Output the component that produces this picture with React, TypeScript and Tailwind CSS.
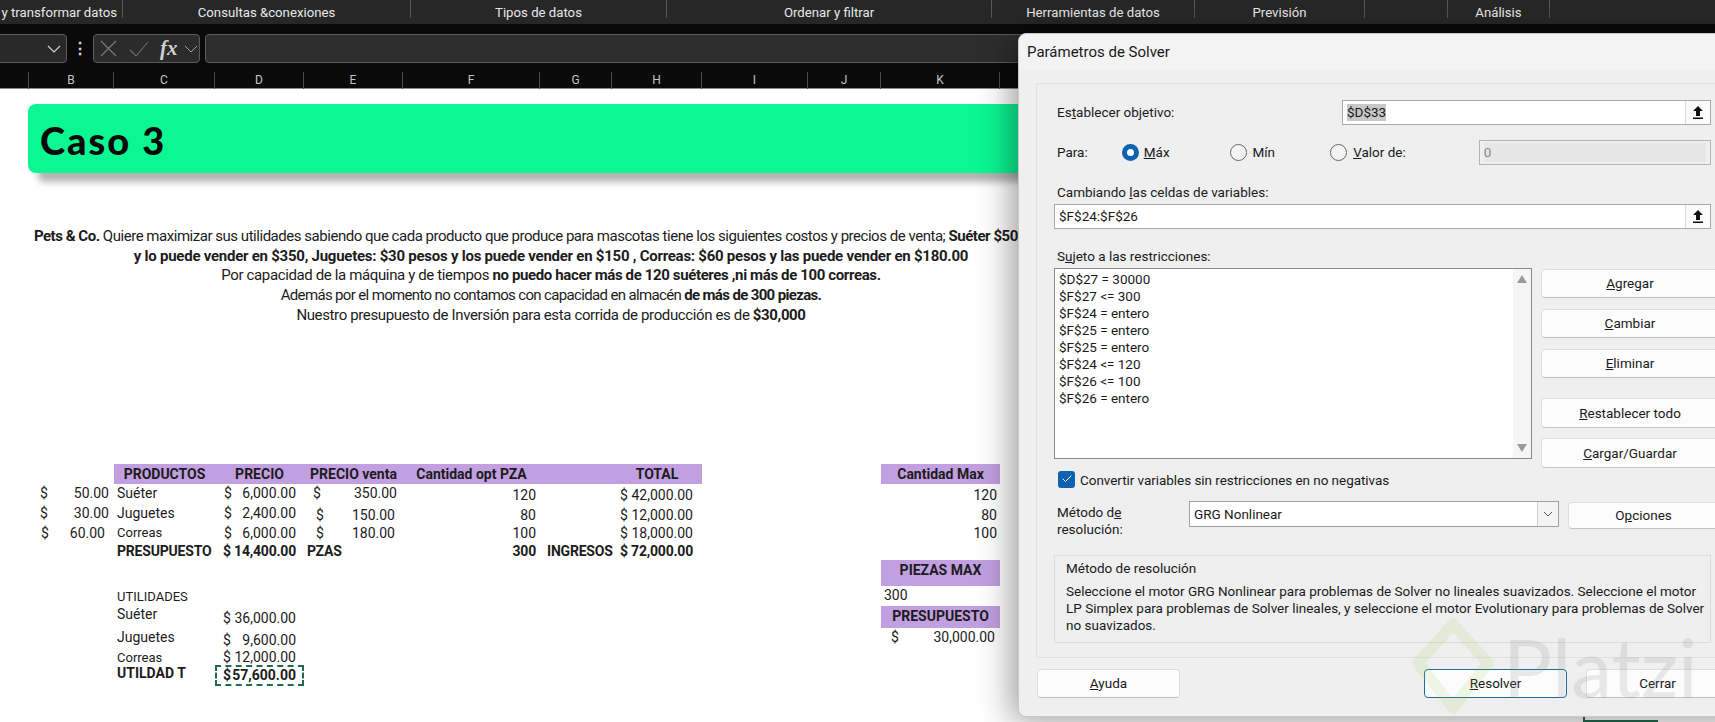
import React from 'react';
import { Check } from 'lucide-react';

const sheetCols = 'grid-cols-[29px_85px_101px_89px_99px_137px_72px_90px_106px_73px_119px]';
const purple = 'bg-[#c29fe0]';

const Chevron = ({ className }: { className: string }) => (
  <svg width="14" height="8" viewBox="0 0 14 8" fill="none" stroke="currentColor" strokeWidth="1.2" className={className}>
    <path d="M1 1 L7 7 L13 1" />
  </svg>
);

const Ribbon = () => (
  <div className="flex h-[24px] items-start bg-[#272727] text-[13.2px] leading-[25px] text-[#e8e8e8] whitespace-nowrap">
    <div className="h-[18px] w-[123px] border-r border-[#555] pr-[5px] text-right">y transformar datos</div>
    <div className="h-[18px] w-[288px] border-r border-[#555] text-center">Consultas &amp;conexiones</div>
    <div className="h-[18px] w-[256px] border-r border-[#555] text-center">Tipos de datos</div>
    <div className="h-[18px] w-[325px] border-r border-[#555] text-center">Ordenar y filtrar</div>
    <div className="h-[18px] w-[203px] border-r border-[#555] text-center">Herramientas de datos</div>
    <div className="h-[18px] w-[170px] border-r border-[#555] text-center">Previsión</div>
    <div className="h-[18px] w-[83px] border-r border-[#555]" />
    <div className="h-[18px] w-[102px] border-r border-[#555] text-center">Análisis</div>
  </div>
);

const FormulaBar = () => (
  <div className="flex h-[48px] items-start bg-[#0a0a0a] pt-[10px]">
    <div className="-ml-[10px] flex h-[29px] w-[77px] items-center justify-end rounded-[4px] border border-[#5c5c5c] bg-[#292929] pr-[5px]">
      <Chevron className="text-[#d0d0d0]" />
    </div>
    <div className="flex h-[29px] w-[26px] items-center justify-center text-[16px] font-bold text-[#d8d8d8]">⋮</div>
    <div className="flex h-[29px] w-[107px] items-center rounded-[4px] border border-[#5c5c5c] bg-[#2b2b2b] pl-[6px]">
      <svg width="17" height="17" viewBox="0 0 17 17" fill="none" stroke="#7a7a7a" strokeWidth="1.1">
        <path d="M1 1 L16 16 M16 1 L1 16" />
      </svg>
      <svg width="20" height="16" viewBox="0 0 20 16" fill="none" stroke="#6c6c6c" strokeWidth="1.1" className="ml-[12px]">
        <path d="M1 9 L7 15 L19 1" />
      </svg>
      <span className="ml-[11px] font-[Liberation_Serif,serif] text-[21px] font-bold italic leading-none text-[#d0d0d0]">fx</span>
      <svg width="14" height="8" viewBox="0 0 14 8" fill="none" stroke="#a0a0a0" strokeWidth="1" className="ml-[6px]">
        <path d="M1 1 L7 7 L13 1" />
      </svg>
    </div>
    <div className="ml-[5px] h-[29px] w-[900px] rounded-[4px] border border-[#5c5c5c] bg-[#2d2d2d]" />
  </div>
);

const ColumnHeaders = () => (
  <div className={`grid h-[17px] ${sheetCols} border-b border-[#8c8c8c] bg-[#0a0a0a] text-center text-[12px] leading-[17px] text-[#c4c4c4]`}>
    {['', 'B', 'C', 'D', 'E', 'F', 'G', 'H', 'I', 'J', 'K'].map((letter) => (
      <div key={letter} className="border-r border-[#4a4a4a]">{letter}</div>
    ))}
  </div>
);

const Row = ({ className, children }: { className: string; children?: React.ReactNode }) => (
  <div className={`grid ${sheetCols} items-center ${className}`}>{children}</div>
);

// accounting format: currency sign on the left, amount on the right
const Money = ({ value, className }: { value: string; className: string }) => (
  <div className={`row-start-1 flex justify-between ${className}`}>
    <span>$</span>
    <span>{value}</span>
  </div>
);

const HeaderCell = ({ className, children }: { className: string; children?: React.ReactNode }) => (
  <div className={`row-start-1 h-full text-center text-[14px] font-bold ${purple} ${className}`}>{children}</div>
);

const Sheet = () => (
  <div className="h-[633px] bg-white text-[14px] leading-[17px] text-[#1c1c1c] whitespace-nowrap">
    <div className="ml-[28px] mt-[15px] flex h-[69px] w-[1150px] items-center rounded-[8px] bg-[#0bf794] pl-[12px] pt-[3px] shadow-[8px_11px_7px_-2px_rgba(0,0,0,0.3)]">
      <span className="font-[Lato,sans-serif] text-[38px] font-black tracking-[2px] text-[#0a0a0a]">Caso 3</span>
    </div>

    <div className="mt-[54px] w-[1102px] text-center text-[15px] leading-[19.7px]">
      <div className="pr-[9px] tracking-[-0.47px]"><b>Pets &amp; Co.</b> Quiere maximizar sus utilidades sabiendo que cada producto que produce para mascotas tiene los siguientes costos y precios de venta; <b>Suéter $50 pesos</b></div>
      <div className="tracking-[-0.25px]"><b>y lo puede vender en $350, Juguetes: $30 pesos y los puede vender en $150 , Correas: $60 pesos y las puede vender en $180.00</b></div>
      <div className="tracking-[-0.37px]">Por capacidad de la máquina y de tiempos <b>no puedo hacer más de 120 suéteres ,ni más de 100 correas.</b></div>
      <div className="tracking-[-0.65px]">Además por el momento no contamos con capacidad en almacén <b>de más de 300 piezas.</b></div>
      <div className="tracking-[-0.37px]">Nuestro presupuesto de Inversión para esta corrida de producción es de <b>$30,000</b></div>
    </div>

    <div className="mt-[138px]">
      <Row className="h-[20px] leading-[20px]">
        <HeaderCell className="col-start-3">PRODUCTOS</HeaderCell>
        <HeaderCell className="col-start-4">PRECIO</HeaderCell>
        <HeaderCell className="col-start-5">PRECIO venta</HeaderCell>
        <HeaderCell className="col-start-6">Cantidad opt PZA</HeaderCell>
        <HeaderCell className="col-start-7" />
        <HeaderCell className="col-start-8">TOTAL</HeaderCell>
        <HeaderCell className="col-start-11">Cantidad Max</HeaderCell>
      </Row>
      <Row className="h-[20px]">
        <Money value="50.00" className="col-start-2 pl-[11px] pr-[5px]" />
        <div className="col-start-3 row-start-1 pl-[3px]">Suéter</div>
        <Money value="6,000.00" className="col-start-4 pl-[9px] pr-[8px]" />
        <Money value="350.00" className="col-start-5 pl-[9px] pr-[6px]" />
        <div className="col-start-6 row-start-1 pr-[4px] pt-[3px] text-right">120</div>
        <Money value="42,000.00" className="col-start-8 pl-[8px] pr-[9px] pt-[3px]" />
        <div className="col-start-11 row-start-1 pr-[3px] pt-[3px] text-right">120</div>
      </Row>
      <Row className="h-[20px]">
        <Money value="30.00" className="col-start-2 pl-[11px] pr-[5px]" />
        <div className="col-start-3 row-start-1 pl-[3px]">Juguetes</div>
        <Money value="2,400.00" className="col-start-4 pl-[9px] pr-[8px]" />
        <Money value="150.00" className="col-start-5 pl-[12px] pr-[8px] pt-[3px]" />
        <div className="col-start-6 row-start-1 pr-[4px] pt-[3px] text-right">80</div>
        <Money value="12,000.00" className="col-start-8 pl-[8px] pr-[9px] pt-[3px]" />
        <div className="col-start-11 row-start-1 pr-[3px] pt-[3px] text-right">80</div>
      </Row>
      <Row className="h-[19px]">
        <Money value="60.00" className="col-start-2 pl-[12px] pr-[9px]" />
        <div className="col-start-3 row-start-1 pb-[2px] pl-[3px] text-[13px]">Correas</div>
        <Money value="6,000.00" className="col-start-4 pl-[9px] pr-[8px]" />
        <Money value="180.00" className="col-start-5 pl-[12px] pr-[8px]" />
        <div className="col-start-6 row-start-1 pr-[4px] text-right">100</div>
        <Money value="18,000.00" className="col-start-8 pl-[8px] pr-[9px]" />
        <div className="col-start-11 row-start-1 pr-[3px] text-right">100</div>
      </Row>
      <Row className="h-[17px] font-bold tracking-[-0.2px]">
        <div className="col-start-3 row-start-1 pl-[3px]">PRESUPUESTO</div>
        <Money value="14,400.00" className="col-start-4 pl-[8px] pr-[8px]" />
        <div className="col-start-5 row-start-1 pl-[3px]">PZAS</div>
        <div className="col-start-6 row-start-1 pr-[4px] text-right">300</div>
        <div className="col-start-7 row-start-1 pl-[7px]">INGRESOS</div>
        <Money value="72,000.00" className="col-start-8 pl-[8px] pr-[9px]" />
      </Row>
      <Row className="h-[26px]">
        <HeaderCell className="col-start-11 leading-[20px]">PIEZAS MAX</HeaderCell>
      </Row>
      <Row className="h-[20px]">
        <div className="col-start-3 row-start-1 pl-[3px] pt-[2px] text-[13px]">UTILIDADES</div>
        <div className="col-start-11 row-start-1 pl-[3px]">300</div>
      </Row>
      <Row className="h-[22px]">
        <div className="col-start-3 row-start-1 pb-[4px] pl-[3px]">Suéter</div>
        <Money value="36,000.00" className="col-start-4 pl-[8px] pr-[8px] pt-[4px]" />
        <HeaderCell className="col-start-11 leading-[20px]">PRESUPUESTO</HeaderCell>
      </Row>
      <Row className="h-[22px]">
        <div className="col-start-3 row-start-1 pb-[3px] pl-[3px]">Juguetes</div>
        <Money value="9,600.00" className="col-start-4 pl-[8px] pr-[8px] pt-[3px]" />
        <Money value="30,000.00" className="col-start-11 pb-[2px] pl-[10px] pr-[5px]" />
      </Row>
      <Row className="h-[15px] leading-[15px]">
        <div className="col-start-3 row-start-1 pl-[3px] text-[13px]">Correas</div>
        <Money value="12,000.00" className="col-start-4 pl-[8px] pr-[8px]" />
      </Row>
      <Row className="h-[21px] font-bold">
        <div className="col-start-3 row-start-1 pb-[4px] pl-[3px]">UTILDAD T</div>
        <Money value="57,600.00" className="col-start-4 h-[21px] items-center border-2 border-dashed border-[#1f6b4f] pl-[6px] pr-[6px]" />
      </Row>
    </div>
  </div>
);

const UploadButton = () => (
  <div className="flex h-full w-[25px] items-center justify-center border-l border-[#d9d9d9] bg-[#fbfbfb]">
    <svg width="12" height="13" viewBox="0 0 12 13">
      <path d="M6 0 L11 5 H8 V10 H4 V5 H1 Z M1 11.5 H11 V13 H1 Z" fill="#111" />
    </svg>
  </div>
);

const RefInput = ({ value, className, selected }: { value: string; className: string; selected?: boolean }) => (
  <div className={`flex h-[25px] items-center justify-between border border-[#a9a9a9] bg-white pl-[4px] ${className}`}>
    <span className={selected ? 'bg-[#c8c8c8]' : ''}>{value}</span>
    <UploadButton />
  </div>
);

const Radio = ({ on }: { on?: boolean }) =>
  on ? (
    <div className="flex size-[17px] items-center justify-center rounded-full bg-[#0f62b0]">
      <div className="size-[7px] rounded-full bg-white" />
    </div>
  ) : (
    <div className="size-[17px] rounded-full border border-[#666] bg-[#f3f3f3]" />
  );

const DialogButton = ({ className, children }: { className: string; children: React.ReactNode }) => (
  <div className={`flex items-center justify-center rounded-[4px] border bg-[#fcfcfc] ${className}`}>
    {children}
  </div>
);

const plain = 'border-[#dedede] border-b-[#c4c4c4]';

const constraints = [
  '$D$27 = 30000',
  '$F$27 <= 300',
  '$F$24 = entero',
  '$F$25 = entero',
  '$F$25 = entero',
  '$F$24 <= 120',
  '$F$26 <= 100',
  '$F$26 = entero',
];

const SolverDialog = () => (
  <div className="absolute left-[1018px] top-[33px] z-10 h-[684px] w-[740px] rounded-[8px] border border-[#c8c8c8] bg-[#efefef] text-[13.5px] leading-[17px] text-[#1a1a1a] whitespace-nowrap shadow-[-6px_4px_34px_rgba(0,0,0,0.4)]">
    <div className="flex h-[36px] items-center rounded-t-[8px] bg-[#f3f3f3] pl-[8px] text-[15px]">Parámetros de Solver</div>
    <div className="ml-[17px] mt-[13px] h-[575px] w-[710px] border border-[#e0e0e0] pl-[17px]">
      <div className="mt-[16px] flex h-[25px] w-[657px] items-center">
        <div className="w-[288px] pl-[3px]">Es<u>t</u>ablecer objetivo:</div>
        <RefInput value="$D$33" selected className="w-[369px]" />
      </div>
      <div className="mt-[15px] flex h-[25px] w-[657px] items-center">
        <div className="w-[68px] pl-[3px]">Para:</div>
        <Radio on />
        <div className="ml-[5px] w-[87px]"><u>M</u>áx</div>
        <Radio />
        <div className="ml-[5px] w-[78px]">Mín</div>
        <Radio />
        <div className="ml-[6px] w-[126px]"><u>V</u>alor de:</div>
        <div className="flex h-[25px] w-[233px] items-center border border-[#b4b4b4] pl-[4px] pr-[4px] text-[#888]">
          <div className="flex h-[19px] w-full items-center bg-[#e6e6e6]">0</div>
        </div>
      </div>
      <div className="mt-[19px] h-[18px] pl-[3px]">Cambiando <u>l</u>as celdas de variables:</div>
      <RefInput value="$F$24:$F$26" className="mt-[2px] w-[657px]" />
      <div className="mt-[19px] h-[18px] pl-[3px]">S<u>u</u>jeto a las restricciones:</div>
      <div className="mt-[2px] flex h-[200px] w-[665px] items-start">
        <div className="flex h-[191px] w-[478px] justify-between border border-[#8a8a8a] bg-white pl-[4px]">
          <div className="pt-[2px]">
            {constraints.map((line, i) => (
              <div key={i} className="h-[17px]">{line}</div>
            ))}
          </div>
          <div className="flex h-full w-[18px] flex-col items-center justify-between bg-[#f6f6f6] py-[6px]">
            <svg width="10" height="8" viewBox="0 0 10 8"><path d="M5 0 L10 8 H0 Z" fill="#9b9b9b" /></svg>
            <svg width="10" height="8" viewBox="0 0 10 8"><path d="M0 0 H10 L5 8 Z" fill="#9b9b9b" /></svg>
          </div>
        </div>
        <div className="ml-[9px] flex flex-col pt-[1px]">
          <DialogButton className={`h-[29px] w-[178px] ${plain}`}><span><u>A</u>gregar</span></DialogButton>
          <DialogButton className={`mt-[11px] h-[29px] w-[178px] ${plain}`}><span><u>C</u>ambiar</span></DialogButton>
          <DialogButton className={`mt-[11px] h-[29px] w-[178px] ${plain}`}><span><u>E</u>liminar</span></DialogButton>
          <DialogButton className={`mt-[20px] h-[30px] w-[178px] ${plain}`}><span><u>R</u>establecer todo</span></DialogButton>
          <DialogButton className={`mt-[10px] h-[30px] w-[178px] ${plain}`}><span><u>C</u>argar/Guardar</span></DialogButton>
        </div>
      </div>
      <div className="mt-[3px] flex h-[16px] items-center pl-[4px]">
        <div className="flex size-[17px] items-center justify-center rounded-[3px] bg-[#0f62b0]">
          <Check size={12} strokeWidth={2} className="text-white" />
        </div>
        <span className="ml-[5px] pt-[3px] tracking-[-0.05px]">Convertir variables sin restricciones en no negativas</span>
      </div>
      <div className="mt-[14px] flex h-[54px] items-start">
        <div className="w-[135px] pl-[3px] pt-[3px]">Método d<u>e</u><br />resolución:</div>
        <div className="flex h-[26px] w-[370px] items-center justify-between border border-[#a0a0a0] bg-white pl-[4px]">
          <span>GRG Nonlinear</span>
          <div className="flex h-full w-[21px] items-center justify-center border-l border-[#cfcfcf] bg-[#f4f4f4]">
            <svg width="10" height="6" viewBox="0 0 10 6" fill="none" stroke="#555" strokeWidth="1"><path d="M1 1 L5 5 L9 1" /></svg>
          </div>
        </div>
        <DialogButton className={`ml-[9px] mt-[1px] h-[27px] w-[151px] ${plain}`}><span>O<u>p</u>ciones</span></DialogButton>
      </div>
      <div className="h-[88px] w-[657px] border border-[#dcdcdc] pl-[11px]">
        <div className="pt-[3px] leading-[18px]">Método de resolución</div>
        <div className="mt-[6px]">
          Seleccione el motor GRG Nonlinear para problemas de Solver no lineales suavizados. Seleccione el motor<br />
          LP Simplex para problemas de Solver lineales, y seleccione el motor Evolutionary para problemas de Solver<br />
          no suavizados.
        </div>
      </div>
    </div>
    <div className="mt-[11px] flex pl-[18px]">
      <DialogButton className={`h-[29px] w-[143px] ${plain}`}><span><u>A</u>yuda</span></DialogButton>
      <DialogButton className="ml-[244px] h-[29px] w-[143px] border-[#1d6d9c]"><span><u>R</u>esolver</span></DialogButton>
      <DialogButton className={`ml-[19px] h-[29px] w-[143px] ${plain}`}><span>Cerrar</span></DialogButton>
    </div>
  </div>
);

const PlatziMark = () => (
  <div className="pointer-events-none absolute left-[1412px] top-[618px] z-20 flex items-start">
    <svg width="82" height="98" viewBox="0 0 82 98" className="opacity-[0.13]">
      <path d="M41 6 L76 45 L41 90 L6 45 Z" fill="none" stroke="#98ca3f" strokeWidth="11" strokeLinejoin="round" />
    </svg>
    <span className="ml-[9px] mt-[8px] font-[Lato,sans-serif] text-[82px] font-normal leading-[80px] text-[#8a8a8a] opacity-[0.17]">Platzi</span>
  </div>
);

export default function App() {
  return (
    <div className="relative h-[722px] w-[1715px] overflow-hidden bg-white font-[Roboto,sans-serif]">
      <Ribbon />
      <FormulaBar />
      <ColumnHeaders />
      <Sheet />
      <SolverDialog />
      <PlatziMark />
      <div className="absolute left-[1583px] top-[717px] h-[5px] w-[75px] border-b-2 border-l-2 border-[#1f6b4f]" />
    </div>
  );
}
